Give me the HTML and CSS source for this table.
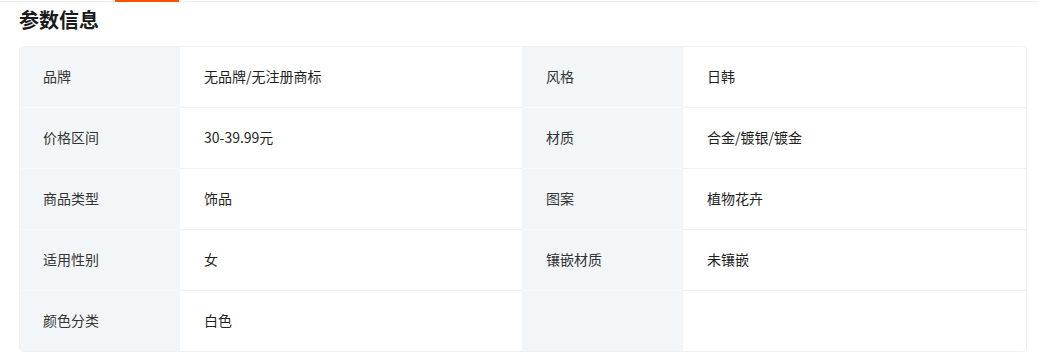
FILE: index.html
```html
<!DOCTYPE html>
<html lang="zh-CN">
<head>
<meta charset="utf-8">
<title>参数信息</title>
<link rel="stylesheet" href="styles.css">
</head>
<body>
<div class="tabbar"><div class="tab-active"></div></div>
<section class="params">
  <h2 class="title">参数信息</h2>
  <div class="table">
    <div class="cell label">品牌</div><div class="cell value">无品牌/无注册商标</div>
    <div class="cell label">风格</div><div class="cell value">日韩</div>
    <div class="cell label">价格区间</div><div class="cell value">30-39.99元</div>
    <div class="cell label">材质</div><div class="cell value">合金/镀银/镀金</div>
    <div class="cell label">商品类型</div><div class="cell value">饰品</div>
    <div class="cell label">图案</div><div class="cell value">植物花卉</div>
    <div class="cell label">适用性别</div><div class="cell value">女</div>
    <div class="cell label">镶嵌材质</div><div class="cell value">未镶嵌</div>
    <div class="cell label last">颜色分类</div><div class="cell value last">白色</div>
    <div class="cell label last"></div><div class="cell value last"></div>
  </div>
</section>
</body>
</html>
```
FILE: styles.css
```css
* { box-sizing: border-box; }
html, body { margin: 0; padding: 0; background: #fff; }
body {
  font-family: "Noto Sans CJK SC", "Noto Sans", sans-serif;
  color: #1f1f1f;
  width: 1038px;
}
.tabbar {
  height: 2px;
  border-bottom: 1px solid #eeeeee;
}
.tab-active {
  margin-left: 115px;
  width: 64px;
  height: 2px;
  background: #ff5000;
}
.params {
  padding: 0 11px 0 19px;
}
.title {
  margin: 5px 0 13px 0;
  font-size: 20px;
  line-height: 26px;
  font-weight: 700;
  color: #1a1a1a;
}
.table {
  display: grid;
  grid-template-columns: 160px 342px 161px 1fr;
  border: 1px solid #f0f0f0;
  border-radius: 4px;
  overflow: hidden;
}
.cell {
  height: 61px;
  display: flex;
  align-items: center;
  padding: 0 0 2px 24px;
  font-size: 14px;
  line-height: 20px;
  border-bottom: 1px solid #f0f1f3;
}
.cell.last { height: 60px; border-bottom: none; }
.label {
  background: #f3f6f9;
  color: #333;
  border-bottom-color: #f7f9fb;
}
.table > .label:nth-child(4n+1) { padding-left: 23px; }
.value {
  background: #fff;
  color: #1f1f1f;
}
```
